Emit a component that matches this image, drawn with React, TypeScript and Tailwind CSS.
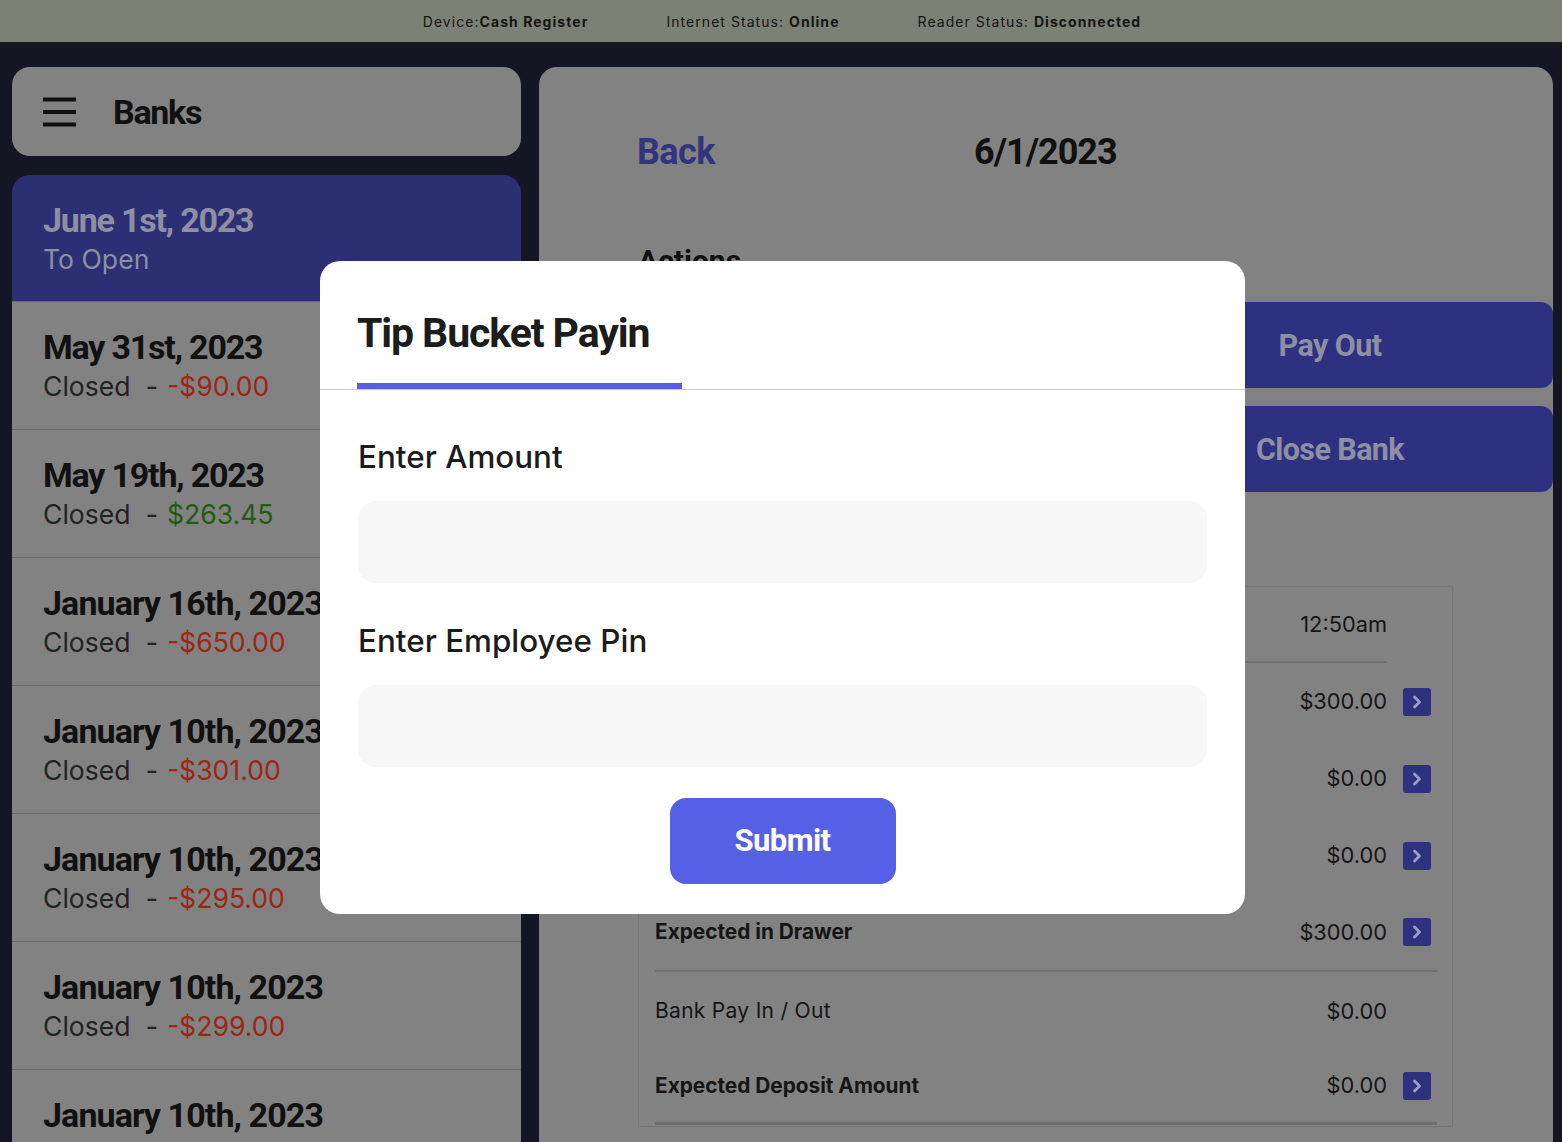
import React from 'react'
import { ChevronRight } from 'lucide-react'

const banks = [
  { date: 'May 31st, 2023', amount: '-$90.00', color: 'text-[#9c2616]' },
  { date: 'May 19th, 2023', amount: '$263.45', color: 'text-[#215c10]' },
  { date: 'January 16th, 2023', amount: '-$650.00', color: 'text-[#9c2616]' },
  { date: 'January 10th, 2023', amount: '-$301.00', color: 'text-[#9c2616]' },
  { date: 'January 10th, 2023', amount: '-$295.00', color: 'text-[#9c2616]' },
  { date: 'January 10th, 2023', amount: '-$299.00', color: 'text-[#9c2616]' },
  { date: 'January 10th, 2023', amount: '', color: '' },
]

const SummaryRow = ({ label, value, bold, arrow, className }: { label?: string; value: string; bold?: boolean; arrow?: boolean; className?: string }) => (
  <div className={`flex items-center text-[#151515] ${className ?? ''}`}>
    <span className={`flex-1 ${bold ? 'text-[20.8px] font-bold' : 'text-[21px] tracking-[0.3px]'}`}>{label}</span>
    <span className="text-[21.8px]">{value}</span>
    <span className="ml-4 flex w-[28px] justify-center">
      {arrow && (
        <span className="flex h-[28px] w-[28px] items-center justify-center rounded-[3px] bg-[#2e3180] text-[#9a9cc0]">
          <ChevronRight size={20} strokeWidth={3.5} />
        </span>
      )}
    </span>
  </div>
)

export default function App() {
  return (
    <div className="relative h-[1142px] w-[1562px] overflow-hidden bg-[#141624] font-['Inter',sans-serif]">
      <div className="flex h-[42px] items-center justify-center gap-[78px] bg-[#7b8175] pl-[2px] text-[14px] tracking-[1.05px] text-[#14160f]">
        <span>Device:<b>Cash Register</b></span>
        <span>Internet Status: <b>Online</b></span>
        <span>Reader Status: <b>Disconnected</b></span>
      </div>

      <div className="flex gap-[18px] pl-[12px] pt-[25px]">
        <div className="w-[509px] shrink-0">
          <div className="flex h-[89px] items-center gap-[36px] rounded-[18px] bg-[#828282] pl-[31px]">
            <svg width="34" height="30" viewBox="0 0 34 30" className="text-[#111]">
              <path d="M0 2.5h33M0 15h33M0 27.5h33" stroke="currentColor" strokeWidth="4" />
            </svg>
            <span className="pt-[1px] font-['Roboto',sans-serif] text-[34px] font-bold tracking-[-1.3px] text-[#111]">Banks</span>
          </div>

          <div className="mt-[19px] overflow-hidden rounded-t-[18px]">
            <div className="h-[126px] bg-[#2c2f73] pl-[31px] pt-[25px]">
              <div className="font-['Roboto',sans-serif] text-[34px] leading-[41px] font-bold tracking-[-1.2px] text-[#8d8fa3]">June 1st, 2023</div>
              <div className="text-[26.6px] leading-[37px] text-[#8d8fa3]">To Open</div>
            </div>
            <div className="border-t border-[#6b6b6b]">
              {banks.map((b, i) => (
                <div key={i} className="h-[128px] border-b border-[#6b6b6b] bg-[#828282] pl-[31px] pt-[25px]">
                  <div className={`font-['Roboto',sans-serif] text-[34px] leading-[41px] font-bold text-[#111] ${i < 2 ? 'tracking-[-1.2px]' : 'tracking-[-0.9px]'}`}>{b.date}</div>
                  {b.amount && (
                    <div className="text-[26.6px] leading-[37px] text-[#222]">
                      Closed<span className="ml-[15px] mr-[9px]">-</span><span className={b.color}>{b.amount}</span>
                    </div>
                  )}
                </div>
              ))}
            </div>
          </div>
        </div>

        <div className="h-[1200px] w-[1014px] shrink-0 rounded-[18px] bg-[#828282] pl-[99px]">
          <div className="flex h-[168px] items-center pt-[1px] font-['Roboto',sans-serif] text-[36px] font-bold">
            <span className="w-[336px] -translate-x-px tracking-[-0.6px] text-[#31347f]">Back</span>
            <span className="tracking-[-1px] text-[#111]">6/1/2023</span>
          </div>
          <div className="h-[67px] pt-[3px] font-['Roboto',sans-serif] text-[30px] font-bold text-[#111]">Actions</div>
          <div className="grid grid-cols-[451px_446px] gap-x-[18px] gap-y-[18px]">
            {['Pay In', 'Pay Out', 'Open Bank', 'Close Bank'].map(t => (
              <div key={t} className="flex h-[86px] items-center justify-center rounded-[12px] bg-[#2e3180] pt-[2px] font-['Roboto',sans-serif] text-[30.5px] font-bold tracking-[-0.6px] text-[#8d8fa3]">{t}</div>
            ))}
          </div>
          <div className="mt-[94px] h-[541px] w-[815px] border border-[#777] pl-[16px]">
            <SummaryRow value="12:50am" className="mr-[65px] h-[76px] border-b-2 border-[#717171] pt-[1px] [&>span:last-child]:hidden" />
            <SummaryRow value="$300.00" arrow className="h-[77px] pr-[21px]" />
            <SummaryRow value="$0.00" arrow className="h-[77px] pr-[21px]" />
            <SummaryRow value="$0.00" arrow className="h-[77px] pr-[21px]" />
            <SummaryRow label="Expected in Drawer" value="$300.00" bold arrow className="mr-[15px] h-[78px] border-b-2 border-[#717171] pr-[6px]" />
            <SummaryRow label="Bank Pay In / Out" value="$0.00" className="h-[78px] pr-[21px]" />
            <SummaryRow label="Expected Deposit Amount" value="$0.00" bold arrow className="mr-[15px] h-[75px] border-b-[3px] border-[#6f6f6f] pb-[1px] pr-[6px]" />
          </div>
        </div>
      </div>

      <div className="absolute left-[320px] top-[261px] h-[653px] w-[925px] rounded-[20px] bg-white">
        <div className="h-[129px] border-b border-[#ccc] pl-[37px]">
          <div className="flex h-[128px] w-[325px] items-center border-b-[6px] border-[#5660e0] pt-[23px] font-['Roboto',sans-serif] text-[41px] font-bold tracking-[-1.1px] whitespace-nowrap text-[#1c1c1c]">
            Tip Bucket Payin
          </div>
        </div>
        <div className="px-[38px]">
          <div className="mt-[45px] text-[31.4px] leading-[44px] font-medium text-[#1c1c1c]">Enter Amount</div>
          <div className="mt-[22px] h-[82px] rounded-[18px] bg-[#f7f7f7]" />
          <div className="mt-[36px] text-[31.4px] leading-[44px] font-medium text-[#1c1c1c]">Enter Employee Pin</div>
          <div className="mt-[22px] h-[82px] rounded-[18px] bg-[#f7f7f7]" />
          <div className="mt-[31px] flex justify-center">
            <div className="flex h-[86px] w-[226px] items-center justify-center rounded-[16px] bg-[#5660e6] font-['Roboto',sans-serif] text-[31px] font-bold tracking-[-0.6px] text-white">Submit</div>
          </div>
        </div>
      </div>
    </div>
  )
}
